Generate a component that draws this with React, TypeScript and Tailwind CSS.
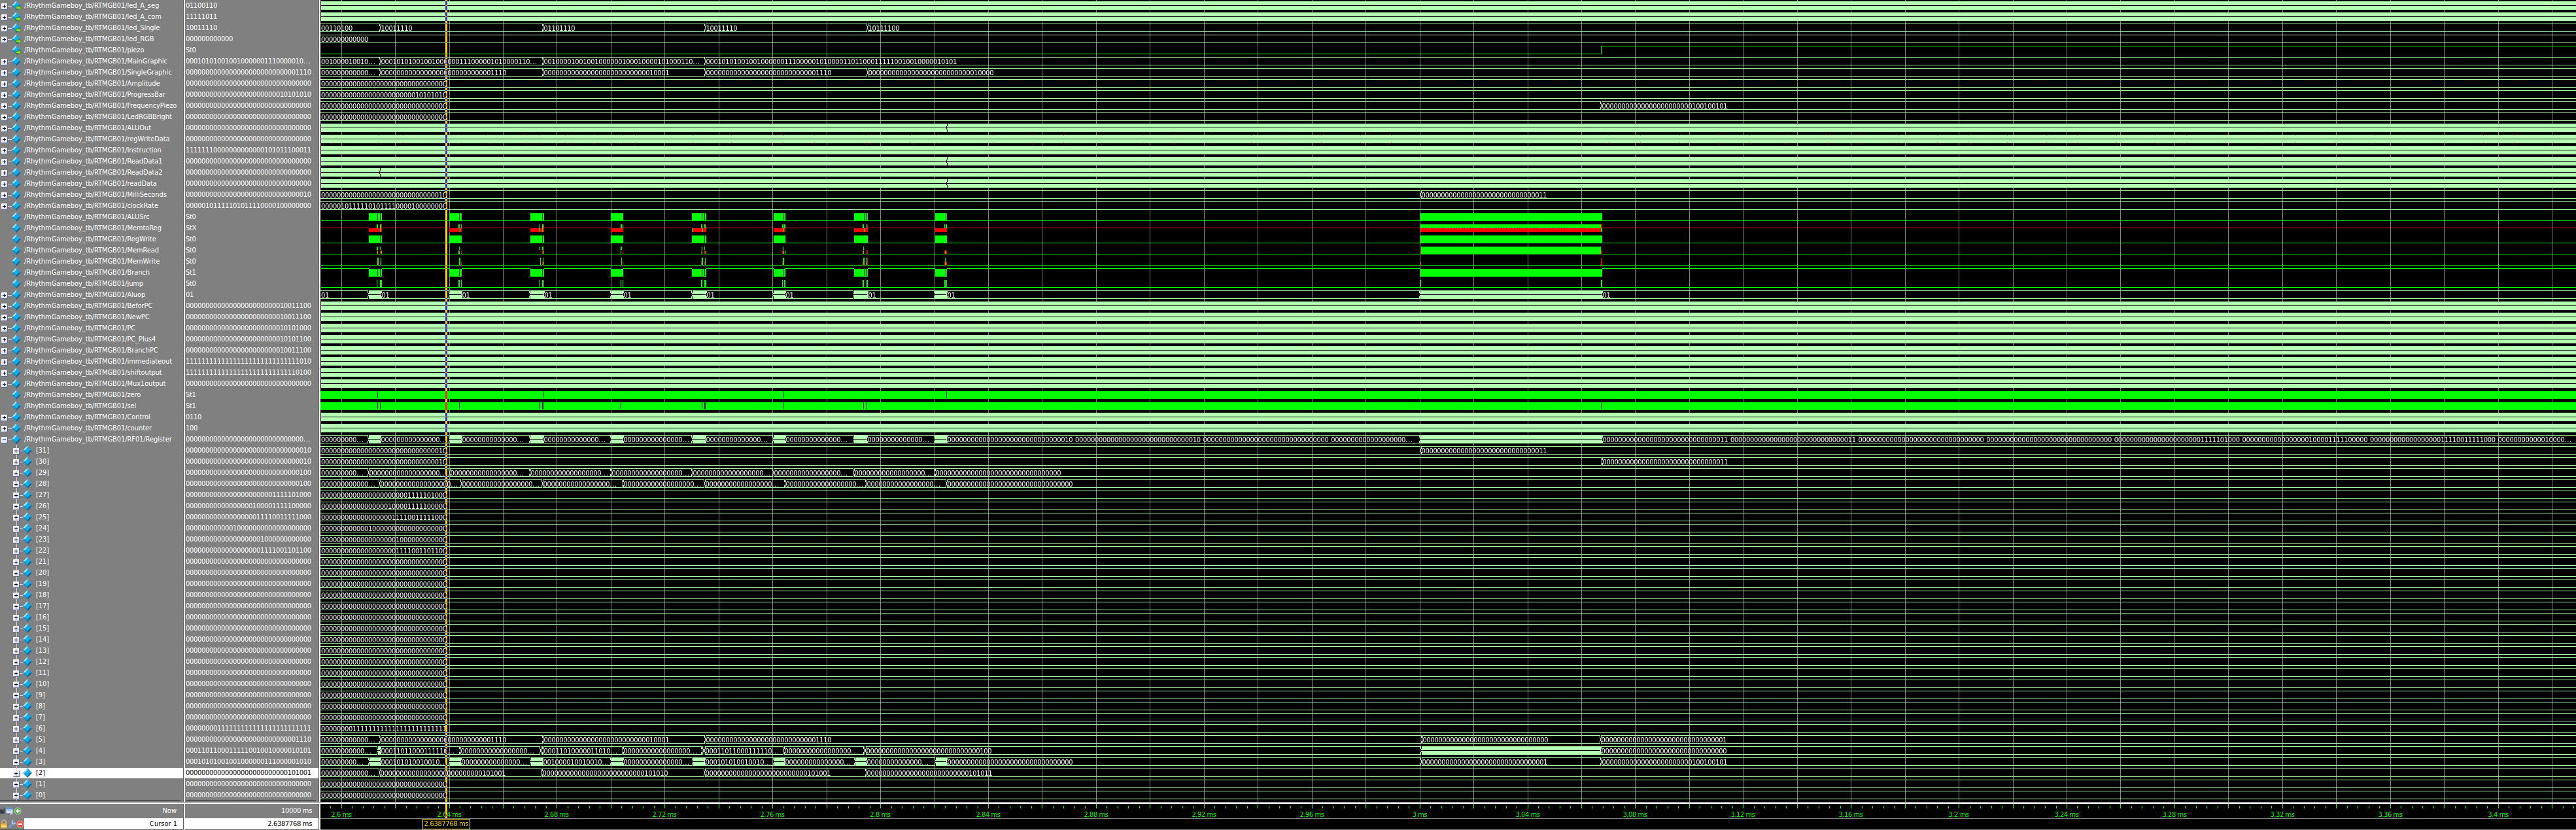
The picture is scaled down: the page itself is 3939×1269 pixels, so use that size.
import type { ReactNode } from 'react';

const LEFT = 490;
const WIDTH = 3449;
const RIGHT = LEFT + WIDTH;

const z = (n: number) => '0'.repeat(n);
const cut = (n: number) => z(n) + '...';

type Seg = [start: number, value: string | null];
type Rect = [x: number, w: number, y: number, h: number, tone: 'g' | 'r' | 'k' | 'b'];

type Wave =
  | { kind: 'bus'; segs: Seg[] }
  | { kind: 'dense'; breaks?: number[]; marks?: number[] }
  | { kind: 'bits'; rects: Rect[] };

type Signal = {
  name: string;
  value: string;
  wave: Wave;
  expand?: '+' | '-';
  child?: boolean;
  output?: boolean;
  selected?: boolean;
};

const FILL = {
  g: 'fill-[#00ff00]',
  r: 'fill-[#ff0000]',
  k: 'fill-black',
  b: 'fill-[#b4ffb4]',
};

/* ---- waveform data ---- */

const bus = (...segs: Seg[]): Wave => ({ kind: 'bus', segs });
const flat = (value: string): Wave => bus([LEFT, value]);
const dense = (breaks: number[] = [], marks: number[] = []): Wave => ({ kind: 'dense', breaks, marks });
const bits = (...rects: Rect[]): Wave => ({ kind: 'bits', rects });

const BURSTS: [number, number][] = [
  [564, 584], [687, 706], [811, 832], [934, 953], [1058, 1080], [1183, 1201], [1306, 1327], [1430, 1448], [2172, 2450],
];
const low = (from = LEFT + 1, to = RIGHT): Rect => [from, to - from, 14, 1, 'g'];
const blocks = (): Rect[] => BURSTS.map(([a, b]) => [a, b - a, 3, 12, 'g'] as Rect);
const gaps = (xs: number[], w = 1): Rect[] => xs.map((x) => [x, w, 3, 11, 'k'] as Rect);
const ups = (xs: [number, number][], y = 3, h = 11): Rect[] => xs.map(([x, w]) => [x, w, y, h, 'g'] as Rect);
const reds = (xs: [number, number][], y = 9, h = 6): Rect[] => xs.map(([x, w]) => [x, w, y, h, 'r'] as Rect);
const highOutside = (): Rect[] => {
  const out: Rect[] = [];
  let x = LEFT + 1;
  for (const [a, b] of BURSTS) {
    out.push([x, a - x, 2, 1, 'g']);
    x = b;
  }
  out.push([x, RIGHT - x, 2, 1, 'g']);
  return out;
};

const GAPS = [577, 581, 702, 829, 1073, 1077, 1197, 1321, 1325, 1446];
const marks = [510, 578, 617, 677, 703, 744, 804, 825, 864, 911, 951, 971, 1058, 1118, 1186, 1198, 1245, 1325, 1333, 1392, 1432, 1519, 1579, 1626, 1686, 1746, 1793, 1853, 1913, 1960, 2020, 2080, 2127];
for (let k = 0, x = 2461; x < RIGHT; k++) {
  marks.push(x);
  x += k % 3 === 0 ? 47 : 60;
}

const MAIN_A = '00010101001001000000111000001010';
const MAIN_B = '00100001001001000000100010000101';
const LOW_A = '00011011000111110010010000010101';
const R27 = z(22) + '1111101000';
const R26 = z(17) + '100001111100000';
const R25 = z(18) + '11110011111000';
const R24 = z(12) + '1' + z(19);
const R23 = z(19) + '1' + z(12);
const R22 = z(19) + '1111001101100';
const FREQ = z(23) + '100100101';

const P = '/RhythmGameboy_tb/RTMGB01/';
const top = (name: string, value: string, wave: Wave, extra: Partial<Signal> = {}): Signal => ({
  name: P + name, value, wave, expand: '+', ...extra,
});
const bit = (name: string, value: string, wave: Wave, extra: Partial<Signal> = {}): Signal => ({
  name: P + name, value, wave, ...extra,
});
const reg = (n: number, value: string, wave?: Wave, extra: Partial<Signal> = {}): Signal => ({
  name: `[${n}]`, value, wave: wave ?? flat(value), expand: '+', child: true, ...extra,
});

const SIGNALS: Signal[] = [
  top('led_A_seg', '01100110', dense(), { output: true }),
  top('led_A_com', '11111011', dense(), { output: true }),
  top('led_Single', '10011110', bus([LEFT, '00110100'], [580, '10011110'], [829, '01101110'], [1077, '10011110'], [1325, '10111100']), { output: true }),
  top('led_RGB', z(12), flat(z(12)), { output: true }),
  bit('piezo', 'St0', bits([491, 1958, 14, 1, 'g'], [2448, 1, 2, 12, 'g'], [2449, RIGHT - 2449, 2, 1, 'g']), { output: true }),
  top('MainGraphic', MAIN_A.slice(0, 30) + '...', bus([LEFT, '001000010010...'], [580, MAIN_A + '000110...'], [829, MAIN_B + '000110...'], [1077, MAIN_A + LOW_A])),
  top('SingleGraphic', z(28) + '1110', bus([LEFT, cut(12)], [580, z(28) + '1110'], [829, z(27) + '10001'], [1077, z(28) + '1110'], [1325, z(27) + '10000'])),
  top('Amplitude', z(32), flat(z(32))),
  top('ProgressBar', z(24) + '10101010', flat(z(24) + '10101010')),
  top('FrequencyPiezo', z(32), bus([LEFT, z(32)], [2447, FREQ])),
  top('LedRGBBright', z(32), flat(z(32))),
  top('ALUOut', z(32), dense([1447])),
  top('regWriteData', z(32), dense([], marks)),
  top('Instruction', '11111110000000000000101011100011', dense()),
  top('ReadData1', z(32), dense([1447])),
  top('ReadData2', z(32), dense([580])),
  top('readData', z(32), dense([1447])),
  top('MilliSeconds', z(30) + '10', bus([LEFT, z(30) + '10'], [2171, z(30) + '11'])),
  top('clockRate', '00000101111101011110000100000000', flat('00000101111101011110000100000000')),
  bit('ALUSrc', 'St0', bits(low(), ...blocks(), ...gaps(GAPS))),
  bit('MemtoReg', 'StX', bits(
    [491, WIDTH, 8, 1, 'r'],
    ...BURSTS.map(([a, b]) => [a, b - a, 8, 1, 'k'] as Rect),
    ...reds(BURSTS.slice(0, 8).map(([a, b]) => [a, b - a] as [number, number])),
    ...ups([[576, 2], [581, 2], [701, 2], [705, 1], [825, 1], [829, 2], [949, 2], [952, 1], [1072, 2], [1077, 2], [1196, 2], [1199, 2], [1319, 2], [1325, 1], [1444, 1], [1446, 2]], 3, 6),
    ...ups([[581, 1], [703, 1], [825, 1], [829, 1], [1058, 1], [1074, 1], [1198, 1], [1321, 1]], 9, 6),
    ...reds([[583, 1], [831, 1], [1079, 1], [1326, 1]], 3, 6),
    [2172, 276, 3, 6, 'g'], [2172, 276, 9, 6, 'r'], [2448, 2, 3, 6, 'r'], [2448, 2, 9, 6, 'g'],
    ...Array.from({ length: 68 }, (_, i) => [2175 + i * 4 + (i % 3 === 0 ? 1 : 0), 1, 8, 1, 'k'] as Rect),
  )),
  bit('RegWrite', 'St0', bits(low(), ...blocks(), ...gaps([581, 829, 1077]))),
  bit('MemRead', 'St0', bits(low(),
    ...ups([[576, 2], [581, 1], [702, 1], [825, 1], [829, 2], [949, 2], [1073, 1], [1077, 1], [1197, 1], [1320, 1]], 3, 5),
    ...reds([[576, 1], [581, 2], [705, 1], [829, 3], [952, 1], [1072, 1], [1077, 3], [1196, 2], [1319, 1], [1325, 2], [1444, 4], [2172, 1]]),
    ...ups([[577, 1], [583, 1], [701, 2], [830, 1], [949, 1], [1073, 1], [1079, 1], [1198, 1], [1200, 1], [1320, 1], [1445, 1]], 9, 6),
    [2173, 275, 3, 12, 'g'], [2448, 2, 9, 6, 'r'])),
  bit('MemWrite', 'St0', bits(low(),
    ...reds([[576, 1], [581, 2], [705, 1], [829, 3], [952, 1], [1072, 1], [1077, 2], [1196, 3], [1319, 2], [1325, 2], [1444, 4], [2172, 1]]),
    ...ups([[577, 2], [582, 1], [702, 2], [826, 1], [830, 1], [950, 1], [1073, 2], [1078, 1], [1197, 2], [1320, 2], [1324, 1], [1445, 1]], 3, 12),
    [1326, 1, 3, 6, 'r'], [2448, 1, 3, 6, 'r'], [2448, 2, 9, 5, 'r'])),
  bit('Branch', 'St1', bits(...highOutside(), ...blocks(), ...gaps(GAPS))),
  bit('jump', 'St0', bits(low(), ...ups([[576, 1], [581, 3], [701, 2], [705, 1], [825, 1], [829, 1], [831, 1], [949, 1], [952, 1], [1072, 2], [1077, 3], [1196, 1], [1199, 2], [1319, 2], [1325, 2], [1444, 2], [1447, 1], [2172, 1], [2448, 2]]))),
  top('Aluop', '01', bus([LEFT, '01'], [562, null], [581, '01'], [686, null], [704, '01'], [809, null], [830, '01'], [933, null], [951, '01'], [1057, null], [1078, '01'], [1181, null], [1199, '01'], [1304, null], [1325, '01'], [1428, null], [1446, '01'], [2170, null], [2448, '01'])),
  top('BeforPC', z(24) + '10011100', dense()),
  top('NewPC', z(24) + '10011100', dense()),
  top('PC', z(24) + '10101000', dense()),
  top('PC_Plus4', z(24) + '10101100', dense()),
  top('BranchPC', z(24) + '10011100', dense()),
  top('immediateout', '1'.repeat(29) + '010', dense()),
  top('shiftoutput', '1'.repeat(28) + '0100', dense()),
  top('Mux1output', z(32), dense()),
  bit('zero', 'St1', bits([490, WIDTH, 3, 12, 'g'], ...gaps([577, 830, 1197, 1447]))),
  bit('sel', 'St1', bits([490, WIDTH, 3, 12, 'g'], ...gaps([577, 581, 702, 825, 949, 1073, 1197, 1320, 1325, 2448]), ...gaps([829, 1077], 2))),
  top('Control', '0110', dense()),
  top('counter', '100', dense()),
  top('RF01/Register', cut(30), bus(
    [LEFT, cut(9)], [562, null], [580, cut(15)], [686, null], [704, cut(14)], [809, null], [826, null], [829, cut(14)],
    [933, null], [949, null], [951, cut(15)], [1057, null], [1077, cut(14)], [1181, null], [1199, cut(14)], [1304, null],
    [1324, cut(14)], [1428, null], [1446, [z(30) + '10', z(30) + '10', z(32), cut(19)].join(' ')],
    [2170, null], [2448, [z(30) + '11', z(30) + '11', z(32), z(32), R27, R26, R25, R24.slice(0, 17) + '...'].join(' ')],
  ), { expand: '-' }),
  reg(31, z(30) + '10', bus([LEFT, z(30) + '10'], [2171, z(30) + '11'])),
  reg(30, z(30) + '10', bus([LEFT, z(30) + '10'], [2448, z(30) + '11'])),
  reg(29, z(29) + '100', bus([LEFT, cut(9)], [562, cut(18)], [686, cut(17)], [809, cut(18)], [933, cut(18)], [1057, cut(18)], [1181, cut(17)], [1304, cut(18)], [1428, z(32)])),
  reg(28, z(29) + '100', bus([LEFT, cut(12)], [579, cut(18)], [704, cut(18)], [828, cut(17)], [951, cut(18)], [1076, cut(17)], [1199, cut(18)], [1323, cut(17)], [1446, z(32)])),
  reg(27, R27),
  reg(26, R26),
  reg(25, R25),
  reg(24, R24),
  reg(23, R23),
  reg(22, R22),
  ...[21, 20, 19, 18, 17, 16, 15, 14, 13, 12, 11, 10, 9, 8, 7].map((n) => reg(n, z(32))),
  reg(6, z(8) + '1'.repeat(24)),
  reg(5, z(28) + '1110', bus([LEFT, cut(12)], [580, z(28) + '1110'], [829, z(27) + '10001'], [1077, z(28) + '1110'], [2173, z(32)], [2446, z(31) + '1'])),
  reg(4, LOW_A, bus([LEFT, cut(11)], [576, null], [580, '00011011000111110...'], [702, cut(17)], [825, ''], [827, ''], [829, '00011010000011010...'], [951, cut(17)], [1072, ''], [1074, ''], [1076, '00011011000111110...'], [1197, cut(17)], [1320, ''], [1322, z(29) + '100'], [2172, null], [2446, z(32)])),
  reg(3, MAIN_A, bus([LEFT, cut(9)], [563, null], [580, '000101010010010...'], [686, null], [703, cut(15)], [810, null], [828, '001000010010010...'], [933, null], [951, cut(15)], [1058, null], [1076, '000101010010010...'], [1182, null], [1198, cut(15)], [1306, null], [1323, cut(14)], [1429, null], [1446, z(32)], [2172, z(31) + '1'], [2447, FREQ])),
  reg(2, z(26) + '101001', bus([LEFT, cut(12)], [579, z(26) + '101001'], [827, z(26) + '101010'], [1076, z(26) + '101001'], [1323, z(26) + '101011']), { selected: true }),
  reg(1, z(32)),
  reg(0, z(32)),
];

/* ---- waveform drawing ---- */

function BusSegment({ start, end, value }: { start: number; end: number; value: string | null }) {
  const first = start === LEFT;
  const a = first ? start : start + 2;
  const tail = end < RIGHT;
  return (
    <g>
      {!first && <rect className="fill-[#b4ffb4]" x={start + 1} y={6} width={1} height={5} />}
      {value === null ? (
        <>
          <rect className="fill-[#b4ffb4]" x={a} y={2} width={end + 2 - a} height={13} />
          <rect className="fill-black" x={a - 1} y={8} width={end + 2 - a} height={1} />
        </>
      ) : (
        <>
          <rect className="fill-[#b4ffb4]" x={a} y={2} width={Math.max(1, end + 1 - a)} height={1} />
          <rect className="fill-[#b4ffb4]" x={a} y={14} width={Math.max(1, end + 1 - a)} height={1} />
          {!first && <rect className="fill-[#b4ffb4]" x={a} y={2} width={1} height={4} />}
          {!first && <rect className="fill-[#b4ffb4]" x={a} y={11} width={1} height={4} />}
          {tail && <rect className="fill-[#b4ffb4]" x={end} y={2} width={1} height={4} />}
          {tail && <rect className="fill-[#b4ffb4]" x={end} y={11} width={1} height={4} />}
          {value !== '' && value.split(' ').map((part, i) => (
            <text key={i} className="fill-white text-[11px] tracking-[-0.3px]" x={(first ? 491 : start + 2.4) + i * 195.6} y={13}>
              {part.replace('...', '')}
              {part.endsWith('...') && <tspan className="tracking-[0.7px]">...</tspan>}
            </text>
          ))}
        </>
      )}
    </g>
  );
}

function WaveRow({ wave }: { wave: Wave }) {
  let content: ReactNode;
  if (wave.kind === 'bus') {
    content = wave.segs.map(([start, value], i) => (
      <BusSegment key={i} start={start} end={wave.segs[i + 1]?.[0] ?? RIGHT} value={value} />
    ));
  } else if (wave.kind === 'dense') {
    content = (
      <>
        <rect className="fill-[#b4ffb4]" x={LEFT + 1} y={2} width={WIDTH} height={13} />
        <rect className="fill-black" x={LEFT + 1} y={8} width={WIDTH} height={1} />
        {wave.breaks?.map((x) => (
          <path key={x} className="fill-black" d={`M${x + 1} 2h1v4h-1zM${x} 6h1v5h-1zM${x + 1} 11h1v4h-1z`} />
        ))}
        {wave.marks?.map((x) => (
          <path key={x} className="fill-[#ff0000]" d={`M${x} 2h1v1h-1zM${x} 14h1v1h-1z`} />
        ))}
      </>
    );
  } else {
    content = wave.rects.map(([x, w, y, h, tone], i) => (
      <rect key={i} className={FILL[tone]} x={x} y={y} width={w} height={h} />
    ));
  }
  return (
    <svg className="block h-[17px] w-[3449px] shrink-0" viewBox={`${LEFT} 0 ${WIDTH} 17`} shapeRendering="crispEdges">
      {content}
    </svg>
  );
}

const gridX = (k: number) => Math.floor(522.1 + 82.45 * k);

function Grid() {
  return (
    <svg className="absolute inset-0 h-[1226px] w-[3449px]" viewBox={`${LEFT} 0 ${WIDTH} 1226`} shapeRendering="crispEdges">
      {Array.from({ length: 42 }, (_, k) => (
        <rect key={k} className="fill-[#808080]" x={gridX(k)} y={0} width={1} height={1226} />
      ))}
    </svg>
  );
}

function Ruler() {
  return (
    <svg className="block h-[22px] w-[3449px]" viewBox={`${LEFT} 0 ${WIDTH} 22`} shapeRendering="crispEdges">
      {Array.from({ length: 212 }, (_, i) => i - 1).map((i) => {
        const major = i % 5 === 0;
        return (
          <rect key={i} className="fill-[#00ff00]" x={Math.floor(522.1 + 16.49 * i)} y={major ? 0 : 3} width={1} height={major ? 7 : 4} />
        );
      })}
      {Array.from({ length: 21 }, (_, k) => (
        <text key={k} className="fill-[#00ff00] text-[11px] tracking-[-0.4px]" textAnchor="middle" x={gridX(k * 2)} y={20}>
          {parseFloat((2.6 + 0.04 * k).toFixed(2))} ms
        </text>
      ))}
    </svg>
  );
}

/* ---- signal list ---- */

function Diamond({ output }: { output?: boolean }) {
  return (
    <svg className="h-[17px] w-[15px] shrink-0" viewBox="0 0 15 17">
      <path fill="#a5e4f5" d="M7 1L0 8.500h3.500L7 4.500z" />
      <path fill="#2f9fd4" d="M7 1l7 7.500h-3.500L7 4.500z" />
      <path fill="#1b8fc6" d="M0 8.500L7 16v-3.500L3.500 8.500z" />
      <path fill="#0b6394" d="M14 8.500L7 16v-3.500l3.500-4z" />
      <path fill="#06b4f2" d="M7 4.200L11 8.500 7 12.800 3 8.500z" />
      {output && <path fill="#8cdc2c" stroke="#2c6b10" strokeWidth="0.7" d="M6 10.300h4.200V8.200L14.400 12l-4.200 3.800v-2.100H6z" />}
    </svg>
  );
}

function Expander({ sign }: { sign: '+' | '-' }) {
  return (
    <span className="grid h-[10px] w-[10px] place-items-center rounded-[1px] border-r border-b border-[#5c6c94] bg-linear-to-br from-white to-[#d4d8ec]">
      <svg className="h-[5px] w-[5px]" viewBox="0 0 5 5" shapeRendering="crispEdges">
        <path d={sign === '+' ? 'M0 2h5v1H0zM2 0h1v5H2z' : 'M0 2h5v1H0z'} />
      </svg>
    </span>
  );
}

function NameRow({ signal }: { signal: Signal }) {
  const { name, expand, child, output, selected } = signal;
  return (
    <div className={`flex h-[17px] items-center ${child ? 'pl-5' : 'pl-[2px]'} ${selected ? 'bg-white text-black shadow-[inset_0_1px_0_#808080]' : ''}`}>
      <div className={`h-[17px] w-[10px] shrink-0 pt-[5px] ${child ? 'bg-[linear-gradient(#d0d0d0,#d0d0d0)] bg-[length:1px_100%] bg-center bg-no-repeat' : ''}`}>
        {expand && <Expander sign={expand} />}
      </div>
      <span className={`mt-[2px] h-px shrink-0 ${child ? 'w-[5px]' : 'w-[6px]'} ${expand ? 'bg-[#d8dce4]' : ''}`} />
      <Diamond output={output} />
      <span className={`leading-[17px] tracking-[-0.07px] whitespace-pre ${child ? 'pl-[5px]' : 'pl-[4px]'}`}>{name}</span>
    </div>
  );
}

function ValueRow({ signal }: { signal: Signal }) {
  const dots = signal.value.endsWith('...');
  return (
    <div className={`h-[17px] pl-px leading-[17px] tracking-[-0.3px] whitespace-pre ${signal.selected ? 'bg-white text-black shadow-[inset_0_1px_0_#808080]' : ''}`}>
      {signal.value.replace('...', '')}
      {dots && <span className="tracking-[0.7px]">...</span>}
    </div>
  );
}

function NowIcons() {
  return (
    <svg className="h-[14px] w-[34px]" viewBox="0 0 34 14">
      <path fill="#3c4048" d="M0 3l2 3 1-3 1.500 3L7 1v10H0z" />
      <rect x="9.500" y="2" width="10" height="8.500" rx="1" fill="#dfeaf8" stroke="#7ea3d4" />
      <rect x="9.500" y="2" width="10" height="2.500" fill="#5f93d8" />
      <path stroke="#8aa8cf" d="M11.500 6.500h6M11.500 8.500h4" />
      <path fill="#b8cdea" d="M15 13l1-3 4-2-1 4z" />
      <circle cx="27" cy="7" r="5" fill="#57b548" stroke="#a4d89a" />
      <path stroke="#fff" strokeWidth="2" d="M24 7h6M27 4v6" />
    </svg>
  );
}

function CursorIcons() {
  return (
    <svg className="h-[14px] w-[37px]" viewBox="0 0 37 14">
      <path fill="none" stroke="#c9b27a" strokeWidth="1.500" d="M3 6V4a3 3 0 0 1 6 0v2" />
      <rect x="1" y="6" width="9.500" height="7" rx="1" fill="#f5b83c" stroke="#d18f1e" strokeWidth="0.600" />
      <path stroke="#fbe0a0" d="M2 8.500h8M2 10.500h8" />
      <path stroke="#6f9bd8" strokeWidth="2.600" strokeLinecap="round" d="M14.500 11.500l6-6" />
      <path fill="none" stroke="#a9c4ea" strokeWidth="2" d="M20.500 1.500a2.500 2.500 0 1 0 3 3" />
      <circle cx="31" cy="7" r="5" fill="#e8503e" stroke="#f2a79c" />
      <path stroke="#fff" strokeWidth="2" d="M28 7h6" />
    </svg>
  );
}

export default function App() {
  return (
    <div className="flex h-[1269px] w-[3939px] flex-col overflow-hidden bg-[#808080] font-['DejaVu_Sans_Condensed','DejaVu_Sans',sans-serif] text-[11px] text-white">
      <div className="flex h-[1226px]">
        <div className="w-[281px] shrink-0 overflow-hidden border-r border-[#606060]">
          {SIGNALS.map((s) => <NameRow key={s.name} signal={s} />)}
          <div className="mr-1 h-px bg-black" />
        </div>
        <div className="w-[2px] shrink-0 bg-white" />
        <div className="w-[205px] shrink-0 overflow-hidden border-r border-[#606060]">
          {SIGNALS.map((s) => <ValueRow key={s.name} signal={s} />)}
          <div className="mr-1 ml-[2px] h-px bg-black" />
        </div>
        <div className="w-[2px] shrink-0 bg-white" />
        <div className="relative isolate flex w-[3449px] shrink-0 flex-col bg-black">
          <Grid />
          <div className="relative flex flex-col">
            {SIGNALS.map((s) => <WaveRow key={s.name} wave={s.wave} />)}
          </div>
          <div className="absolute top-0 left-[191px] h-full w-[3px] bg-[#ffd700] mix-blend-difference" />
        </div>
      </div>

      <div className="h-[3px] shrink-0 border-t border-[#707070] bg-white" />

      <div className="flex h-10 shrink-0">
        <div className="flex w-[281px] shrink-0 flex-col border-r border-b border-[#606060]">
          <div className="flex h-[22px] items-center justify-between pr-[10px]">
            <NowIcons />
            <span>Now</span>
          </div>
          <div className="flex h-[17px] items-center">
            <CursorIcons />
            <div className="h-full flex-1 bg-white pr-[9px] text-right leading-[18px] text-black">Cursor 1</div>
          </div>
        </div>
        <div className="w-[2px] shrink-0 bg-white" />
        <div className="flex w-[205px] shrink-0 flex-col border-r border-b border-[#606060] text-right tracking-[-0.3px]">
          <div className="h-[22px] pr-[10px] leading-[22px]">10000 ms</div>
          <div className="h-[17px] bg-white pr-[10px] leading-[18px] text-black">2.6387768 ms</div>
        </div>
        <div className="w-[2px] shrink-0 bg-white" />
        <div className="relative isolate flex w-[3449px] shrink-0 flex-col border-b border-[#808080] bg-black">
          <Ruler />
          <div className="h-px bg-[#808080]" />
          <div className="ml-[156px] grid h-[16px] w-[73px] place-items-center border border-[#ffd700] leading-[14px] tracking-[-0.3px] whitespace-nowrap text-[#ffd700]">
            2.6387768 ms
          </div>
          <div className="absolute top-0 left-[191px] h-[22px] w-[3px] bg-[#ffd700] mix-blend-difference" />
        </div>
      </div>
    </div>
  );
}
